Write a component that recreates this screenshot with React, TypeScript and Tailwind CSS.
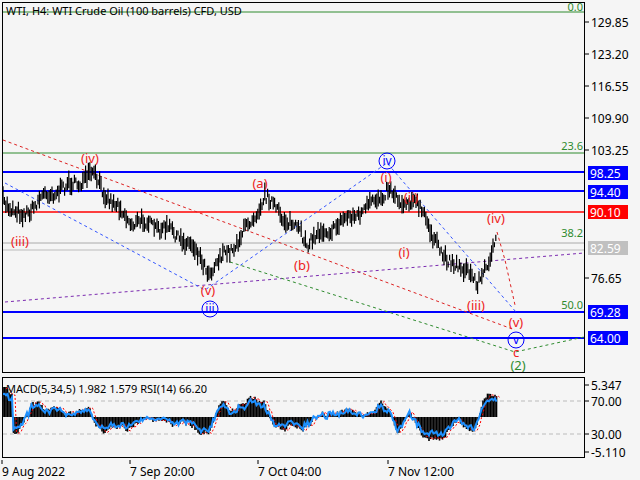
import React from "react";

const FC = "font-['DejaVu_Sans','Liberation_Sans',sans-serif]";

function rng(seed: number) {
  let s = seed;
  return () => {
    s = (s * 16807) % 2147483647;
    return (s - 1) / 2147483646;
  };
}

const WP: [number, number][] = [
  [3, 200], [12, 210], [22, 218], [40, 200], [60, 190], [75, 185], [92, 176], [110, 200], [130, 222],
  [150, 225], [170, 232], [190, 245], [210, 272], [225, 255], [240, 240], [265, 197], [285, 220],
  [308, 242], [330, 230], [350, 218], [370, 208], [388, 188], [400, 205], [412, 198], [428, 225],
  [445, 262], [460, 265], [477, 285], [488, 262], [497, 242],
];
function interp(x: number) {
  for (let i = 0; i < WP.length - 1; i++) {
    const [x0, y0] = WP[i], [x1, y1] = WP[i + 1];
    if (x >= x0 && x <= x1) return y0 + ((y1 - y0) * (x - x0)) / (x1 - x0);
  }
  return WP[WP.length - 1][1];
}

function Candles() {
  const r = rng(7);
  const out: React.ReactNode[] = [];
  let n = 0;
  for (let x = 3; x <= 497; x += 1.4) {
    const base = interp(x) + (r() - 0.5) * 10 + Math.sin(x / 4) * 2.5;
    const h = 3 + r() * 8;
    out.push(<line key={n++} x1={x} x2={x} y1={base - h} y2={base + h * 0.7} stroke="#000" strokeWidth={1.2} />);
  }
  return <>{out}</>;
}

// derivative-like oscillator from the price path
function Macd() {
  const r = rng(3);
  const hist: React.ReactNode[] = [];
  const pts: string[] = [];
  const sig: string[] = [];
  const z = 415;
  let n = 0;
  let noise = 0;
  for (let x = 3; x <= 497; x += 1.5) {
    noise = noise * 0.7 + (r() - 0.5) * 6;
    const v = (interp(x - 10) - interp(x + 2)) * 0.9 + noise;
    const c = Math.max(-24, Math.min(30, v));
    hist.push(<line key={n++} x1={x} x2={x} y1={z} y2={z - c} stroke="#000" strokeWidth={1.6} />);
    pts.push(`${x},${z - c * 0.75 + (r() - 0.5) * 5}`);
    sig.push(`${x + 3},${z - c * 0.95}`);
  }
  return (
    <>
      {hist}
      <polyline points={sig.join(" ")} fill="none" stroke="#ff0000" strokeWidth={1} strokeDasharray="2 2" />
      <polyline points={pts.join(" ")} fill="none" stroke="#1e90ff" strokeWidth={2} />
    </>
  );
}

const redLbl: [string, number, number][] = [
  ["(iv)", 90, 163], ["(iii)", 20, 246], ["(v)", 208, 295], ["(a)", 260, 188], ["(b)", 302, 270],
  ["(i)", 386, 182], ["(ii)", 411, 202], ["(i)", 404, 257], ["(iii)", 476, 310], ["(iv)", 496, 223],
  ["(v)", 516, 327], ["c", 516, 357],
];

function MainChart() {
  return (
    <svg width={585} height={375} className={FC}>
      <rect x={2.5} y={2.5} width={582} height={370} fill="#f5f5f5" stroke="#000" />
      <line x1={3} x2={584} y1={12} y2={12} stroke="#2e8b2e" />
      <line x1={3} x2={584} y1={153} y2={153} stroke="#2e8b2e" />
      <line x1={3} x2={584} y1={243} y2={243} stroke="#aaa" />
      <line x1={3} x2={584} y1={250} y2={250} stroke="#bbb" />
      <line x1={3} x2={584} y1={212} y2={212} stroke="#ff0000" strokeWidth={1.5} />
      {[172, 191, 312, 338].map((y) => (
        <line key={y} x1={3} x2={584} y1={y} y2={y} stroke="#0000ff" strokeWidth={2} />
      ))}
      <text x={583} y={11} fontSize={11} fill="#2e8b2e" textAnchor="end">0.0</text>
      <text x={583} y={150} fontSize={11} fill="#2e8b2e" textAnchor="end">23.6</text>
      <text x={583} y={237} fontSize={11} fill="#2e8b2e" textAnchor="end">38.2</text>
      <text x={583} y={309} fontSize={11} fill="#2e8b2e" textAnchor="end">50.0</text>
      <line x1={3} x2={515} y1={140} y2={330} stroke="#dd2222" strokeDasharray="3 3" />
      <line x1={5} x2={584} y1={302} y2={253} stroke="#7b2ab0" strokeDasharray="3 3" />
      <polyline points="5,183 205,290 387,163 516,312" fill="none" stroke="#3355ff" strokeDasharray="3 3" />
      <polyline points="230,262 515,352 584,337" fill="none" stroke="#2e8b2e" strokeDasharray="3 3" />
      <polyline points="497,232 505,260 515,305" fill="none" stroke="#dd2222" strokeDasharray="3 3" />
      <Candles />
      {redLbl.map(([t, x, y], i) => (
        <text key={i} x={x} y={y} fontSize={13} fill="#ee2222" textAnchor="middle">{t}</text>
      ))}
      <text x={518} y={370} fontSize={13} fill="#2e8b2e" textAnchor="middle">(2)</text>
      {([["iii", 210, 309], ["iv", 387, 161], ["v", 516, 340]] as [string, number, number][]).map(([t, x, y]) => (
        <g key={t}>
          <circle cx={x} cy={y} r={8} fill="none" stroke="#0000ff" />
          <text x={x} y={y + 4} fontSize={12} fill="#0000ff" textAnchor="middle">{t}</text>
        </g>
      ))}
      <text x={6} y={15} fontSize={11} fill="#000">WTI, H4:  WTI Crude Oil (100 barrels) CFD, USD</text>
    </svg>
  );
}

function MainAxis() {
  const ticks: [string, number][] = [
    ["129.85", 22], ["123.20", 54], ["116.55", 86], ["109.90", 118], ["103.25", 150], ["76.65", 278],
  ];
  const boxes: [string, number, string][] = [
    ["98.25", 173, "#0000ff"], ["94.40", 192, "#0000ff"], ["90.10", 212, "#ff0000"], ["82.59", 248, "#c0c0c0"],
    ["69.28", 312, "#0000ff"], ["64.00", 338, "#0000ff"],
  ];
  return (
    <svg width={55} height={375} className={FC}>
      {ticks.map(([t, y]) => (
        <g key={t}>
          <line x1={0} x2={4} y1={y} y2={y} stroke="#000" />
          <text x={6} y={y + 5} fontSize={12} fill="#000">{t}</text>
        </g>
      ))}
      {boxes.map(([t, y, c]) => (
        <g key={t}>
          <rect x={3} y={y - 7} width={40} height={14} fill={c} />
          <text x={5} y={y + 5} fontSize={12} fill="#fff">{t}</text>
        </g>
      ))}
    </svg>
  );
}

function SubChart() {
  return (
    <svg width={585} height={85} viewBox="0 373 585 85" className={FC}>
      <rect x={2.5} y={375.5} width={582} height={80} fill="#f5f5f5" stroke="#000" />
      <line x1={3} x2={584} y1={399} y2={399} stroke="#bbb" strokeDasharray="4 3" />
      <line x1={3} x2={584} y1={432} y2={432} stroke="#bbb" strokeDasharray="4 3" />
      <Macd />
      <text x={6} y={391} fontSize={11} fill="#000">MACD(5,34,5) 1.982 1.579 RSI(14) 66.20</text>
    </svg>
  );
}

function SubAxis() {
  const t: [string, number][] = [["5.347", 383], ["70.00", 399], ["30.00", 432], ["-5.110", 450]];
  return (
    <svg width={55} height={85} viewBox="0 373 55 85" className={FC}>
      {t.map(([s, y]) => (
        <g key={s}>
          <line x1={0} x2={4} y1={y} y2={y} stroke="#000" />
          <text x={6} y={y + 5} fontSize={12} fill="#000">{s}</text>
        </g>
      ))}
    </svg>
  );
}

export default function App() {
  const times: [string, number][] = [["9 Aug 2022", 2], ["7 Sep 20:00", 130], ["7 Oct 04:00", 258], ["7 Nov 12:00", 388]];
  return (
    <div className="w-[640px] h-[480px] bg-[#f5f5f5] flex flex-col overflow-hidden">
      <div className="flex">
        <MainChart />
        <MainAxis />
      </div>
      <div className="flex">
        <SubChart />
        <SubAxis />
      </div>
      <svg width={640} height={22} className={FC}>
        {times.map(([s, x]) => (
          <g key={s}>
            <line x1={x} x2={x} y1={0} y2={4} stroke="#000" />
            <text x={x} y={16} fontSize={12} fill="#000">{s}</text>
          </g>
        ))}
      </svg>
    </div>
  );
}
